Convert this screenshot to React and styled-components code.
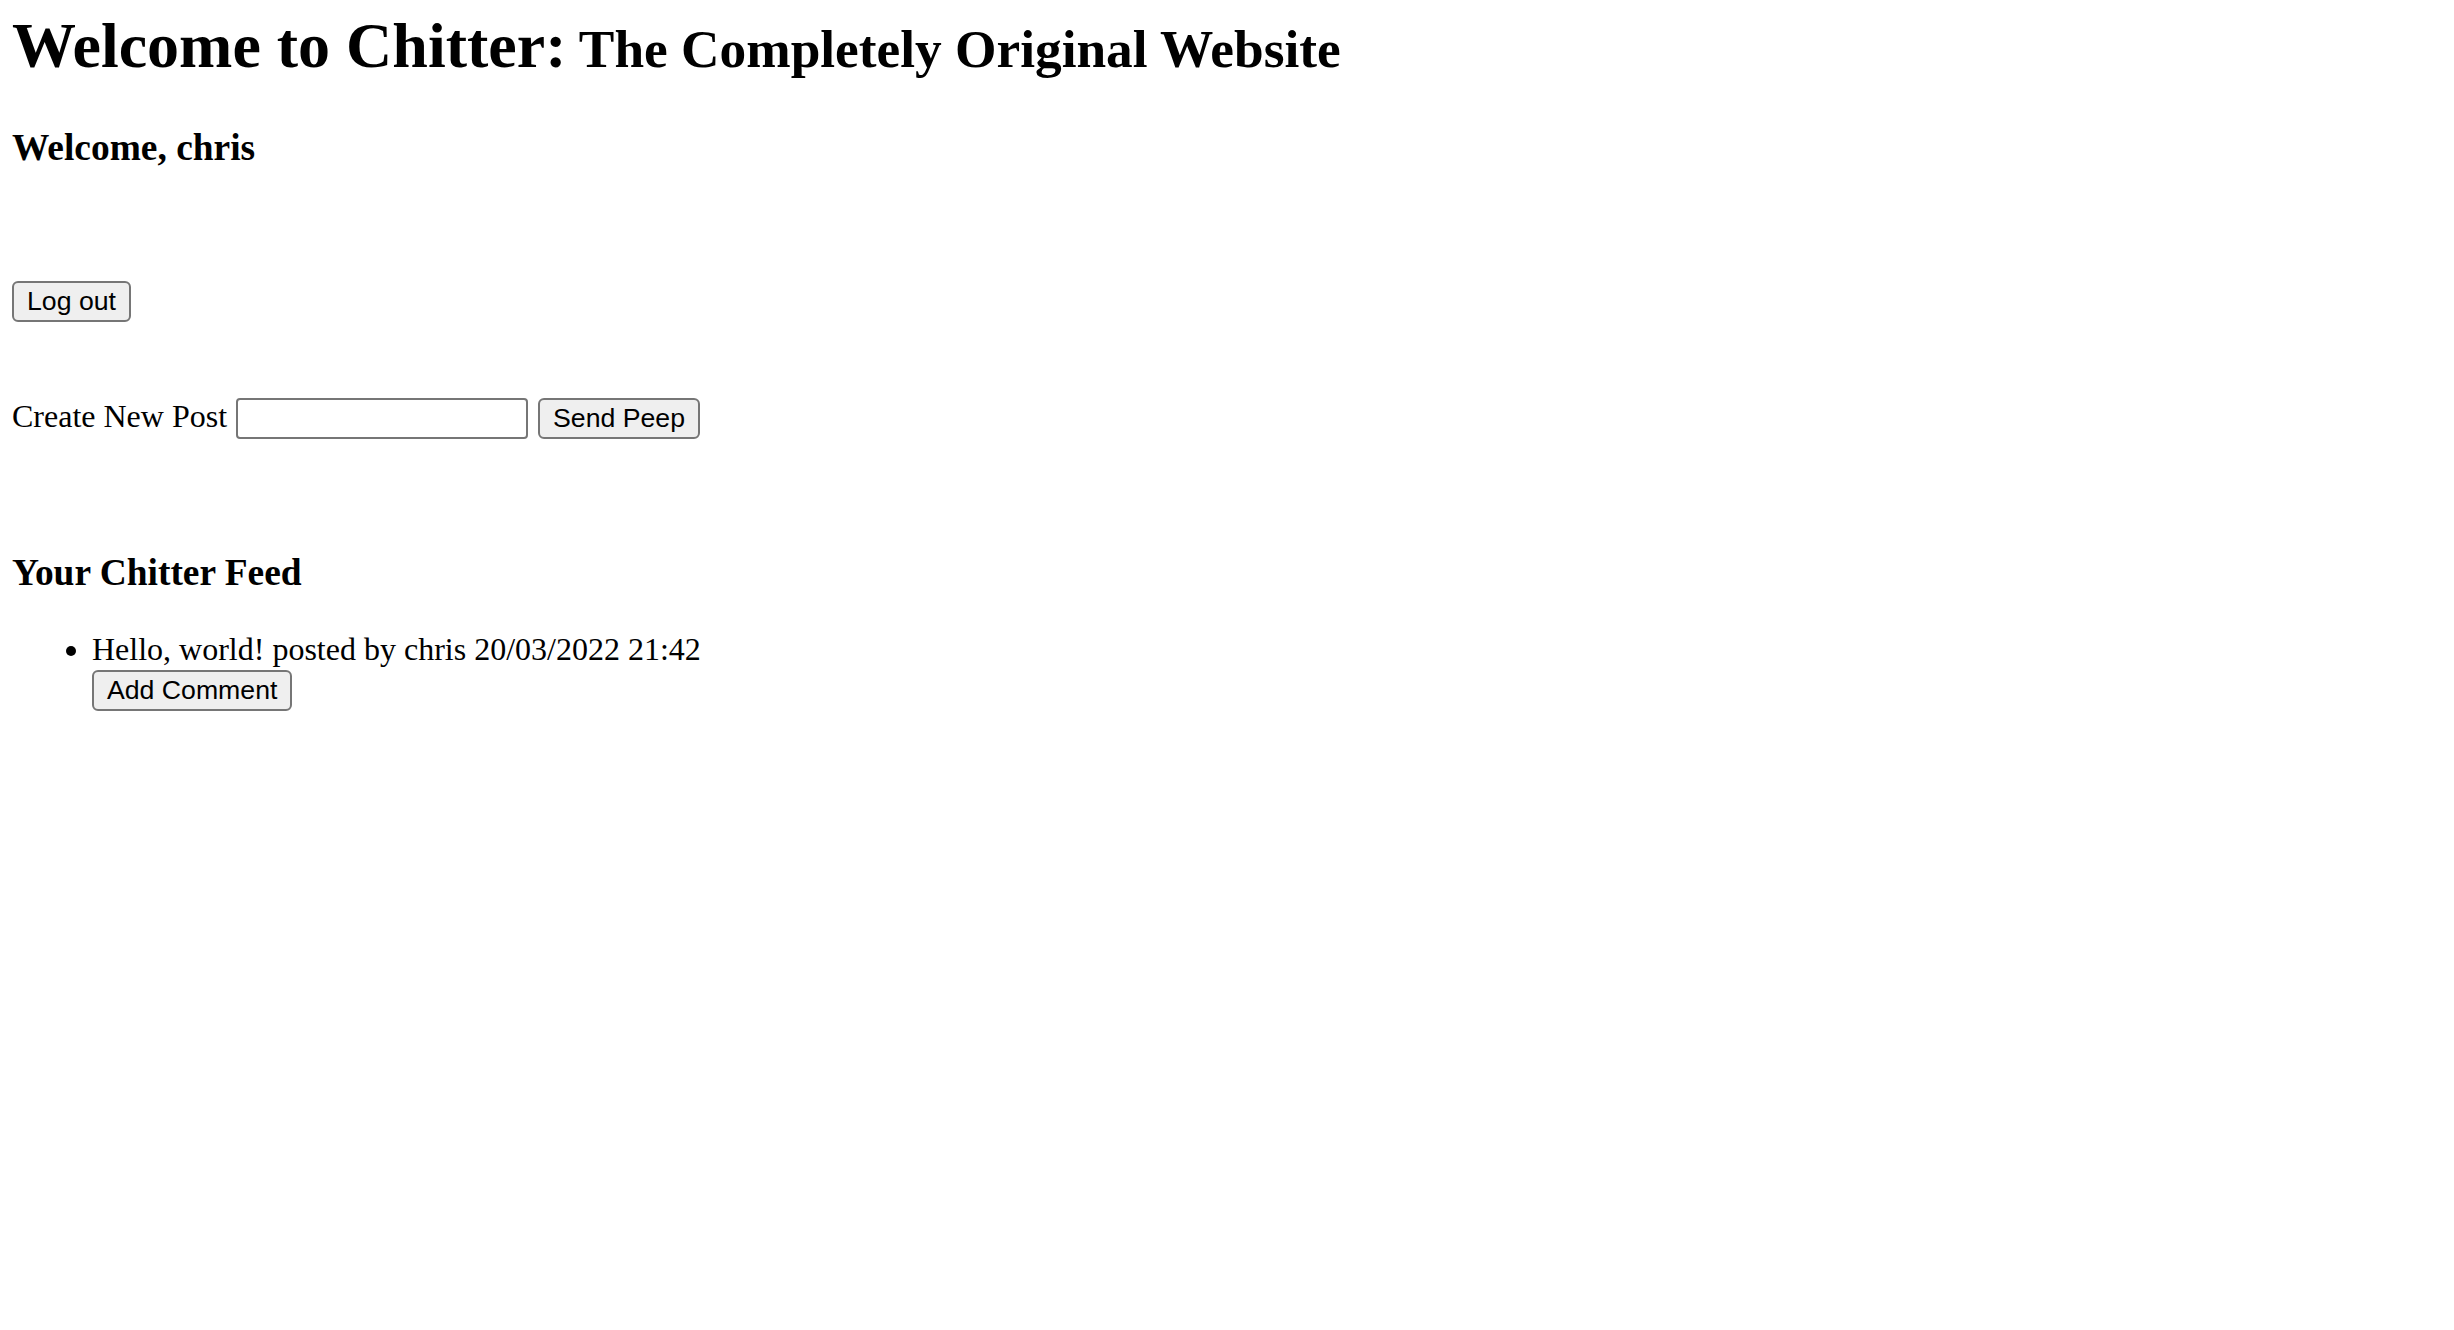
import React, { useState } from "react";
import styled, { createGlobalStyle } from "styled-components";

const GlobalStyle = createGlobalStyle`
  html, body {
    margin: 0;
    padding: 0;
    background: #ffffff;
  }
  body {
    color: #000000;
    font-family: "Liberation Serif", "Times New Roman", serif;
    font-size: 32px;
  }
`;

const Page = styled.main`
  display: flow-root;
  padding: 0 12px;
`;

const Title = styled.h1`
  margin: 9px 0 0;
  font-size: 64px;
  line-height: 74px;
  font-weight: bold;
  white-space: nowrap;
`;

const Tagline = styled.small`
  font-size: 53.33px;
`;

const SectionHeading = styled.h3`
  margin: ${({ $gap }) => $gap}px 0 0;
  font-size: 37.44px;
  line-height: 43px;
  font-weight: bold;
`;

const Button = styled.button`
  display: ${({ $block }) => ($block ? "block" : "inline-block")};
  appearance: none;
  margin: ${({ $gap }) => ($gap ? `${$gap}px 0 0` : 0)};
  padding: 3px 13px;
  border: 2px solid #767676;
  border-radius: 6px;
  background: #efefef;
  color: #000000;
  font-family: "Liberation Sans", Arial, sans-serif;
  font-size: 26.67px;
  line-height: normal;
  cursor: pointer;

  &:hover {
    background: #e5e5e5;
  }
`;

const LogoutForm = styled.form`
  margin: 112px 0 0;
`;

const PostForm = styled.form`
  display: flex;
  align-items: baseline;
  margin: 76px 0 0;
`;

const Label = styled.label`
  line-height: normal;
`;

const TextInput = styled.input`
  box-sizing: border-box;
  width: 292px;
  height: 41px;
  margin: 0 10px 0 9px;
  padding: 2px 4px;
  border: 2px solid #767676;
  border-radius: 4px;
  background: #ffffff;
  font-family: "Liberation Sans", Arial, sans-serif;
  font-size: 26.67px;
  outline: none;
`;

const Feed = styled.ul`
  margin: 37px 0 0;
  padding: 0 0 0 80px;
  list-style: disc;
`;

const Peep = styled.li`
  line-height: normal;
`;

const peeps = [
  {
    id: 1,
    body: "Hello, world!",
    author: "chris",
    posted: "20/03/2022 21:42",
  },
];

export default function App() {
  const [draft, setDraft] = useState("");

  return (
    <>
      <GlobalStyle />
      <Page>
        <Title>
          Welcome to Chitter:<Tagline> The Completely Original Website</Tagline>
        </Title>
        <SectionHeading $gap={39.5}>Welcome, chris</SectionHeading>

        <LogoutForm onSubmit={(e) => e.preventDefault()}>
          <Button type="submit" $block>
            Log out
          </Button>
        </LogoutForm>

        <PostForm onSubmit={(e) => e.preventDefault()}>
          <Label htmlFor="peep">Create New Post</Label>
          <TextInput
            id="peep"
            type="text"
            value={draft}
            onChange={(e) => setDraft(e.target.value)}
          />
          <Button type="submit">Send Peep</Button>
        </PostForm>

        <SectionHeading $gap={112}>Your Chitter Feed</SectionHeading>
        <Feed>
          {peeps.map((peep) => (
            <Peep key={peep.id}>
              {peep.body} posted by {peep.author} {peep.posted}
              <Button type="button" $block $gap={2}>
                Add Comment
              </Button>
            </Peep>
          ))}
        </Feed>
      </Page>
    </>
  );
}
